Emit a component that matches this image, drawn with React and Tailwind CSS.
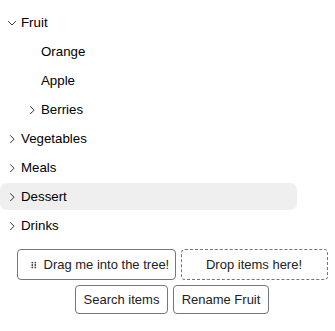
import React from "react";

function ChevronRight() {
  return (
    <svg width="16" height="16" viewBox="0 0 16 16" className="shrink-0">
      <path d="M6.2 4.3 L10 8.2 L6.2 12.1" fill="none" stroke="#333" strokeWidth="1" />
    </svg>
  );
}

function ChevronDown() {
  return (
    <svg width="16" height="16" viewBox="0 0 16 16" className="shrink-0">
      <path d="M4.2 6.2 L8 10 L11.8 6.2" fill="none" stroke="#333" strokeWidth="1" />
    </svg>
  );
}

function Row({ level = 0, icon, label, selected }) {
  return (
    <div
      className={
        "flex items-center h-[27px] rounded-[7px] text-[13.3px] text-black " +
        (selected ? "bg-[#efefef]" : "")
      }
      style={{ paddingLeft: 4 + level * 20 }}
    >
      <div className="w-4 h-4 flex items-center justify-center shrink-0">
        {icon === "right" ? <ChevronRight /> : icon === "down" ? <ChevronDown /> : null}
      </div>
      <span className="ml-[1px]">{label}</span>
    </div>
  );
}

function Grip() {
  return (
    <svg width="6" height="8" viewBox="0 0 6 8" className="shrink-0">
      {[1.3, 4.3].map((x) =>
        [1.6, 4, 6.4].map((y) => <circle key={x + "-" + y} cx={x} cy={y} r="0.9" fill="#444" />)
      )}
    </svg>
  );
}

export default function App() {
  const rows = [
    { level: 0, icon: "down", label: "Fruit" },
    { level: 1, icon: null, label: "Orange" },
    { level: 1, icon: null, label: "Apple" },
    { level: 1, icon: "right", label: "Berries" },
    { level: 0, icon: "right", label: "Vegetables" },
    { level: 0, icon: "right", label: "Meals" },
    { level: 0, icon: "right", label: "Dessert", selected: true },
    { level: 0, icon: "right", label: "Drinks" },
  ];
  return (
    <div className="w-[335px] h-[331px] bg-white font-['Liberation_Sans',Arial,sans-serif] overflow-hidden">
      <div className="w-[297px] pt-[9px] flex flex-col gap-[2px]">
        {rows.map((r) => (
          <Row key={r.label} {...r} />
        ))}
      </div>
      <div className="mt-[10px] pl-[9px] flex flex-col gap-[5px] text-[13px] text-[#222] whitespace-nowrap">
        <div className="flex justify-center gap-[5px]">
          <button className="h-[31px] w-[159px] border border-[#767676] rounded-[4px] bg-white flex items-center pl-[13px]">
            <Grip />
            <span className="ml-[7px]">Drag me into the tree!</span>
          </button>
          <button className="h-[31px] w-[147px] border border-dashed border-[#767676] rounded-[4px] bg-white flex items-center justify-center">
            Drop items here!
          </button>
        </div>
        <div className="flex justify-center gap-[5px]">
          <button className="h-[29px] w-[93px] border border-[#767676] rounded-[4px] bg-white flex items-center justify-center">
            Search items
          </button>
          <button className="h-[29px] w-[96px] border border-[#767676] rounded-[4px] bg-white flex items-center justify-center">
            Rename Fruit
          </button>
        </div>
      </div>
    </div>
  );
}
